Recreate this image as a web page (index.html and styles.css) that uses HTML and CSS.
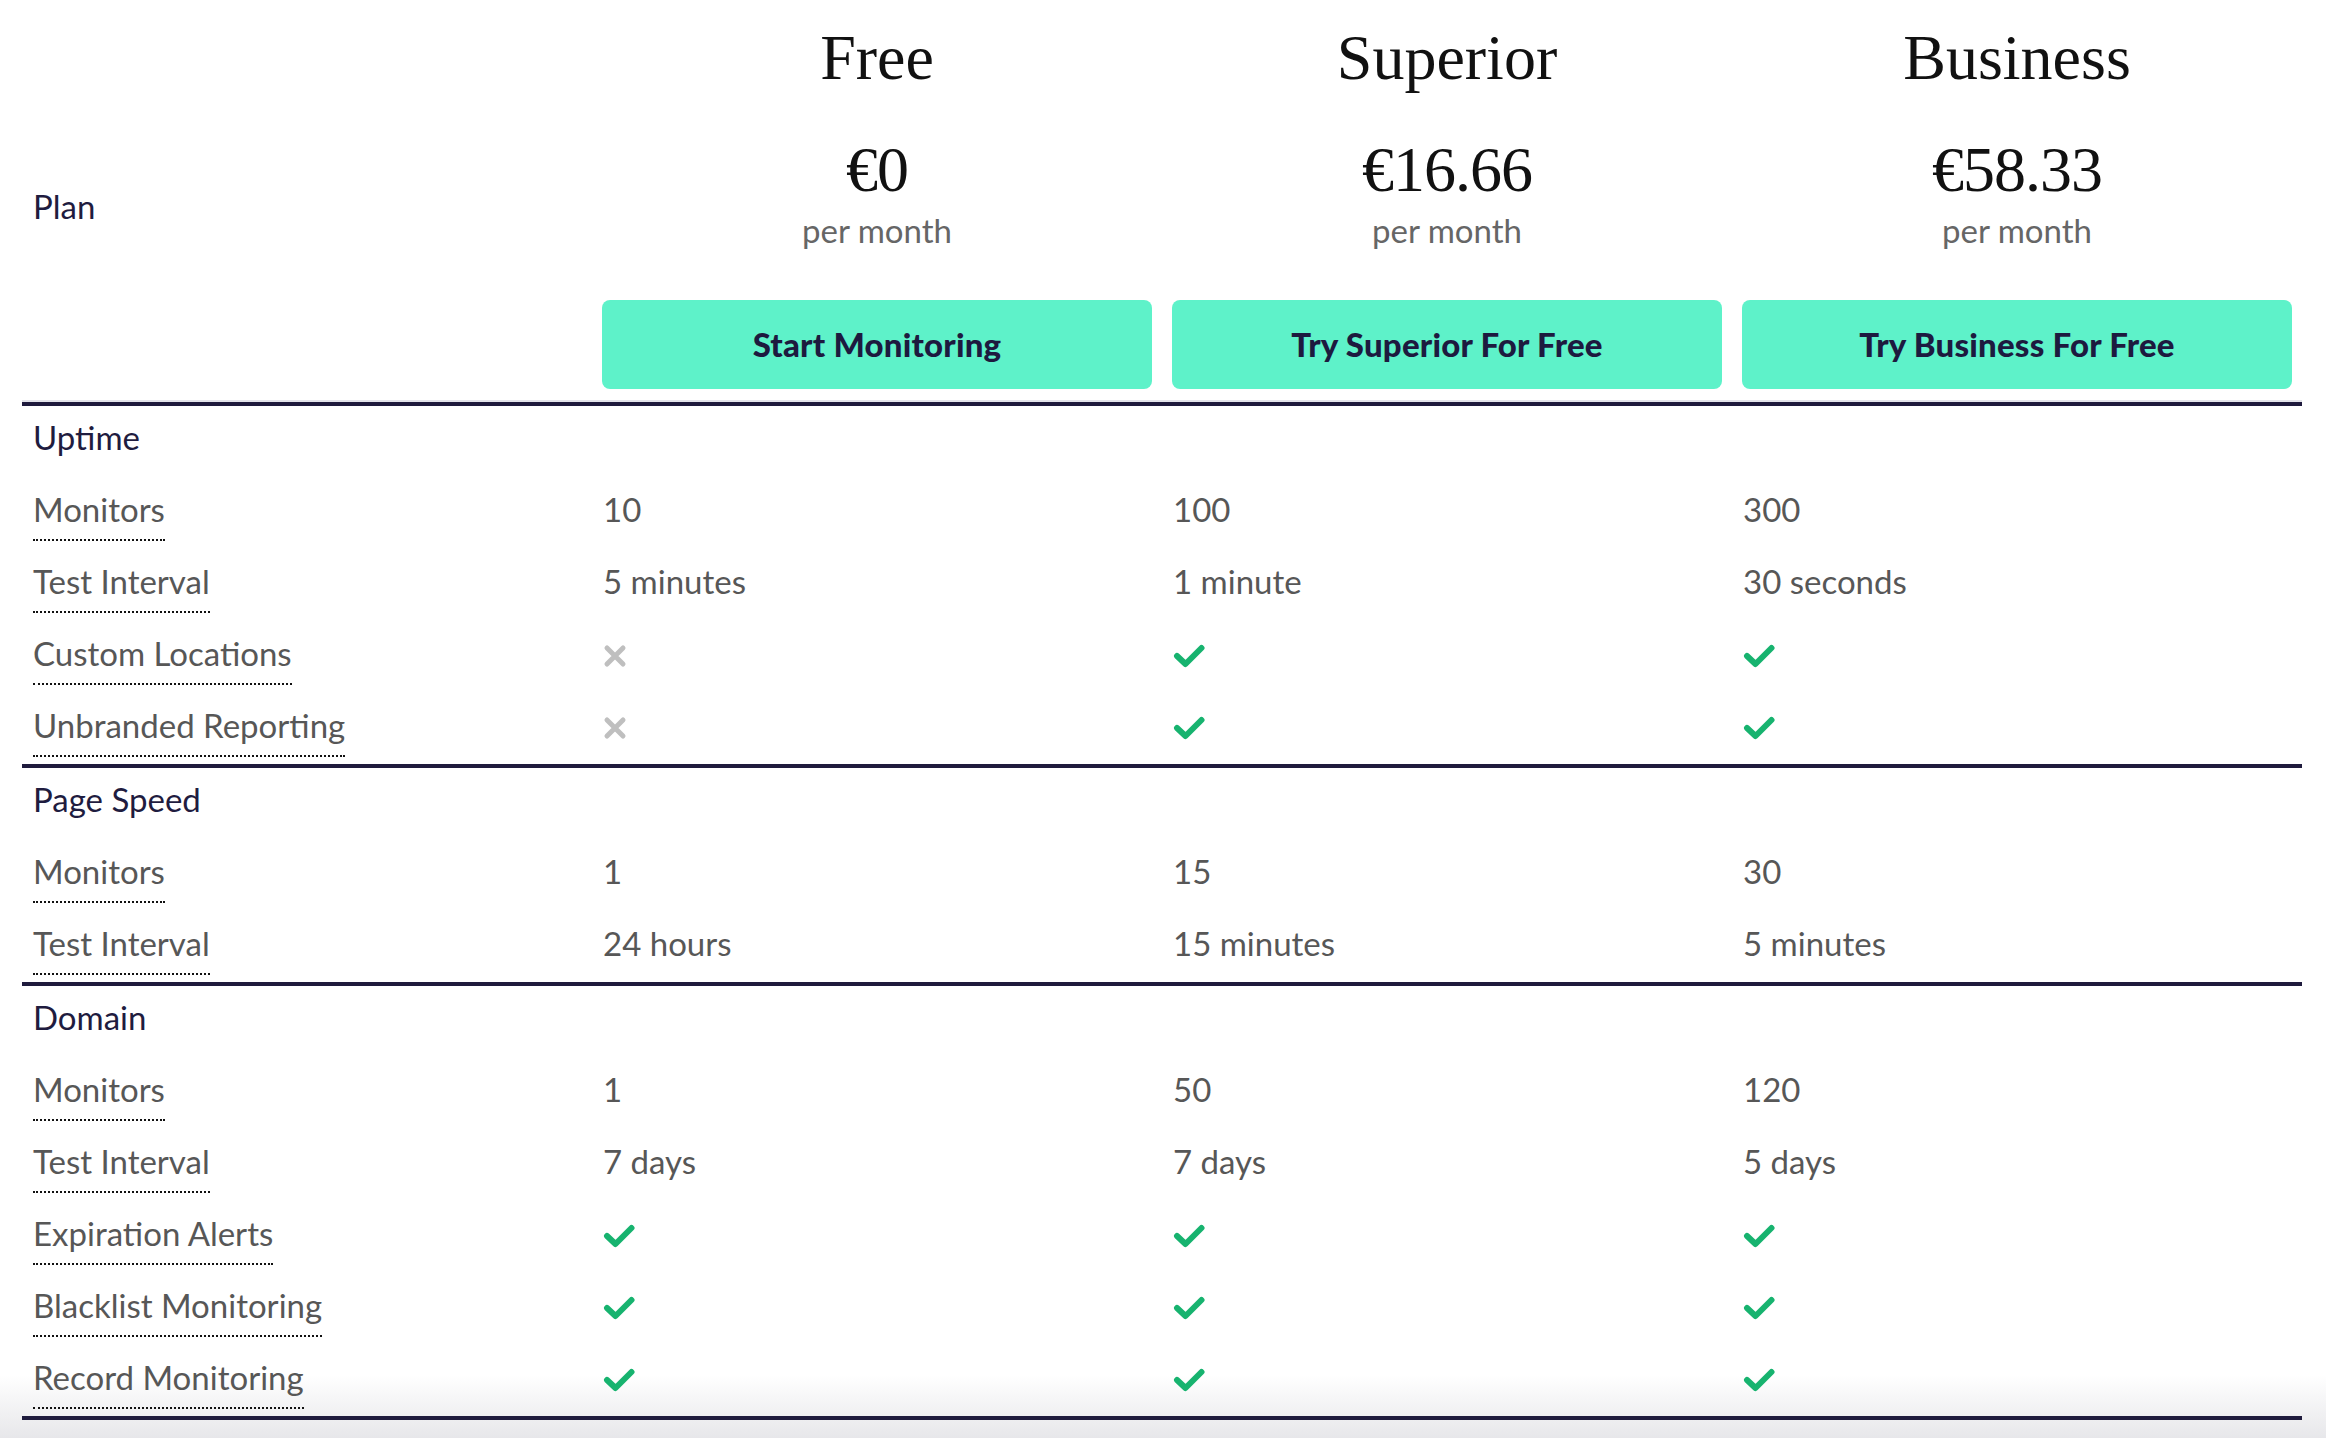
FILE: index.html
```html
<!DOCTYPE html>
<html lang="en">
<head>
<meta charset="utf-8">
<title>Plans</title>
<link rel="stylesheet" href="styles.css">
</head>
<body>
<div class="pricing">
  <div class="plans-head">
    <div class="plan-label">Plan</div>
    <div class="plan">
      <h2 class="plan-name">Free</h2>
      <div class="plan-price">€0</div>
      <div class="plan-period">per month</div>
      <a class="plan-btn" href="#">Start Monitoring</a>
    </div>
    <div class="plan">
      <h2 class="plan-name">Superior</h2>
      <div class="plan-price">€16.66</div>
      <div class="plan-period">per month</div>
      <a class="plan-btn" href="#">Try Superior For Free</a>
    </div>
    <div class="plan">
      <h2 class="plan-name">Business</h2>
      <div class="plan-price">€58.33</div>
      <div class="plan-period">per month</div>
      <a class="plan-btn" href="#">Try Business For Free</a>
    </div>
  </div>

  <section class="group">
    <div class="group-title">Uptime</div>
    <div class="row">
      <div class="feat"><span>Monitors</span></div>
      <div class="val">10</div><div class="val">100</div><div class="val">300</div>
    </div>
    <div class="row">
      <div class="feat"><span>Test Interval</span></div>
      <div class="val">5 minutes</div><div class="val">1 minute</div><div class="val">30 seconds</div>
    </div>
    <div class="row">
      <div class="feat"><span>Custom Locations</span></div>
      <div class="val"><svg class="ico-x" viewBox="0 0 24 24"><path d="M4 4 L20 20 M20 4 L4 20"/></svg></div>
      <div class="val"><svg class="ico-ok" viewBox="0 0 32 24"><path d="M4 12 L12.5 20 L28.5 4"/></svg></div>
      <div class="val"><svg class="ico-ok" viewBox="0 0 32 24"><path d="M4 12 L12.5 20 L28.5 4"/></svg></div>
    </div>
    <div class="row">
      <div class="feat"><span>Unbranded Reporting</span></div>
      <div class="val"><svg class="ico-x" viewBox="0 0 24 24"><path d="M4 4 L20 20 M20 4 L4 20"/></svg></div>
      <div class="val"><svg class="ico-ok" viewBox="0 0 32 24"><path d="M4 12 L12.5 20 L28.5 4"/></svg></div>
      <div class="val"><svg class="ico-ok" viewBox="0 0 32 24"><path d="M4 12 L12.5 20 L28.5 4"/></svg></div>
    </div>
  </section>

  <section class="group">
    <div class="group-title">Page Speed</div>
    <div class="row">
      <div class="feat"><span>Monitors</span></div>
      <div class="val">1</div><div class="val">15</div><div class="val">30</div>
    </div>
    <div class="row">
      <div class="feat"><span>Test Interval</span></div>
      <div class="val">24 hours</div><div class="val">15 minutes</div><div class="val">5 minutes</div>
    </div>
  </section>

  <section class="group">
    <div class="group-title">Domain</div>
    <div class="row">
      <div class="feat"><span>Monitors</span></div>
      <div class="val">1</div><div class="val">50</div><div class="val">120</div>
    </div>
    <div class="row">
      <div class="feat"><span>Test Interval</span></div>
      <div class="val">7 days</div><div class="val">7 days</div><div class="val">5 days</div>
    </div>
    <div class="row">
      <div class="feat"><span>Expiration Alerts</span></div>
      <div class="val"><svg class="ico-ok" viewBox="0 0 32 24"><path d="M4 12 L12.5 20 L28.5 4"/></svg></div>
      <div class="val"><svg class="ico-ok" viewBox="0 0 32 24"><path d="M4 12 L12.5 20 L28.5 4"/></svg></div>
      <div class="val"><svg class="ico-ok" viewBox="0 0 32 24"><path d="M4 12 L12.5 20 L28.5 4"/></svg></div>
    </div>
    <div class="row">
      <div class="feat"><span>Blacklist Monitoring</span></div>
      <div class="val"><svg class="ico-ok" viewBox="0 0 32 24"><path d="M4 12 L12.5 20 L28.5 4"/></svg></div>
      <div class="val"><svg class="ico-ok" viewBox="0 0 32 24"><path d="M4 12 L12.5 20 L28.5 4"/></svg></div>
      <div class="val"><svg class="ico-ok" viewBox="0 0 32 24"><path d="M4 12 L12.5 20 L28.5 4"/></svg></div>
    </div>
    <div class="row">
      <div class="feat"><span>Record Monitoring</span></div>
      <div class="val"><svg class="ico-ok" viewBox="0 0 32 24"><path d="M4 12 L12.5 20 L28.5 4"/></svg></div>
      <div class="val"><svg class="ico-ok" viewBox="0 0 32 24"><path d="M4 12 L12.5 20 L28.5 4"/></svg></div>
      <div class="val"><svg class="ico-ok" viewBox="0 0 32 24"><path d="M4 12 L12.5 20 L28.5 4"/></svg></div>
    </div>
  </section>
</div>
</body>
</html>
```
FILE: styles.css
```css
html {
  background-color: #e7e7ea;
  background-image: linear-gradient(to bottom, #ffffff 0, #ffffff 1375px, #e7e7ea 1438px);
  background-repeat: no-repeat;
  background-size: 100% 1438px;
  min-height: 100%;
}

body {
  margin: 0;
  font-family: Lato, "Noto Sans", sans-serif;
  font-size: 33px;
  color: #575757;
}

.pricing {
  margin-left: 22px;
  width: 2280px;
  border-bottom: 4px solid #1f1b3d;
}

.plans-head {
  display: grid;
  grid-template-columns: repeat(4, 570px);
  padding: 22px 0 13px;
}

.plan-label {
  align-self: center;
  padding-left: 11px;
  color: #1f1c3f;
  line-height: 40px;
}

.plan {
  display: flex;
  flex-direction: column;
  align-items: center;
}

.plan-name {
  margin: 0;
  font-family: "Liberation Serif", "Times New Roman", serif;
  font-weight: 400;
  font-size: 64px;
  line-height: 72px;
  color: #111111;
}

.plan-price {
  margin-top: 40px;
  font-family: "Liberation Serif", "Times New Roman", serif;
  font-size: 64px;
  line-height: 72px;
  letter-spacing: -1px;
  color: #111111;
}

.plan-period {
  margin-top: 4px;
  line-height: 40px;
  color: #666666;
}

.plan-btn {
  box-sizing: border-box;
  margin-top: 50px;
  width: calc(100% - 20px);
  height: 89px;
  padding-bottom: 2px;
  display: flex;
  align-items: center;
  justify-content: center;
  background: #5ef2c9;
  border-radius: 8px;
  color: #1d1a3f;
  font-weight: 900;
  font-size: 33px;
  letter-spacing: 0.2px;
  text-decoration: none;
}

.group {
  border-top: 4px solid #1f1b3d;
}

.group:first-of-type {
  box-shadow: 0 -2px 0 #e3e3ea;
}

.group-title {
  box-sizing: border-box;
  height: 70px;
  padding: 11px 0 0 11px;
  line-height: 40px;
  color: #1f1c3f;
}

.row {
  box-sizing: border-box;
  display: grid;
  grid-template-columns: repeat(4, 570px);
  height: 72px;
  padding-top: 13px;
}

.feat {
  padding-left: 11px;
}

.feat span {
  display: inline-block;
  line-height: 40px;
  padding-bottom: 10px;
  border-bottom: 2px dotted #111111;
}

.val {
  display: flex;
  align-items: center;
  height: 40px;
  padding-left: 11px;
  line-height: 40px;
}

.ico-ok {
  width: 32px;
  height: 24px;
  margin-top: 6px;
  fill: none;
  stroke: #17b36f;
  stroke-width: 6;
  stroke-linecap: round;
  stroke-linejoin: round;
}

.ico-x {
  width: 24px;
  height: 24px;
  margin-top: 6px;
  fill: none;
  stroke: #bfbfbf;
  stroke-width: 5;
  stroke-linecap: round;
}
```
